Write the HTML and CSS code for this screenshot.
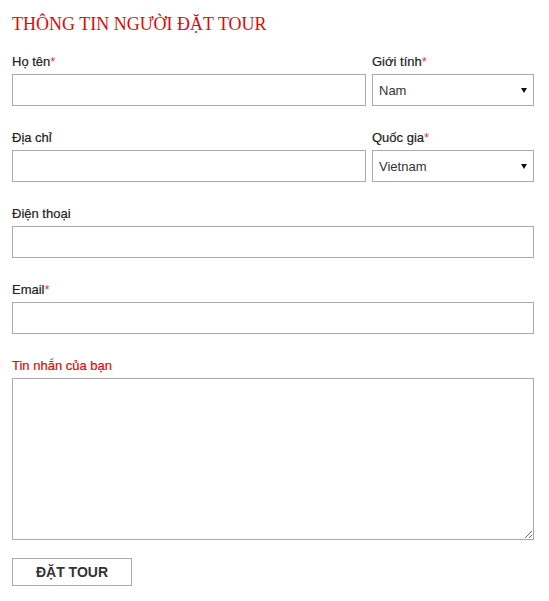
FILE: index.html
```html
<!DOCTYPE html>
<html lang="vi">
<head>
<meta charset="utf-8">
<title>Thông tin người đặt tour</title>
<link rel="stylesheet" href="styles.css">
</head>
<body>
<form class="booking">
  <h2 class="title">THÔNG TIN NGƯỜI ĐẶT TOUR</h2>
  <div class="row">
    <div class="group">
      <label class="label">Họ tên<span class="req">*</span></label>
      <input class="field" type="text">
    </div>
    <div class="group">
      <label class="label">Giới tính<span class="req">*</span></label>
      <div class="select-wrap">
        <select class="field select"><option>Nam</option><option>Nữ</option></select>
        <span class="arrow"></span>
      </div>
    </div>
  </div>
  <div class="row">
    <div class="group">
      <label class="label">Địa chỉ</label>
      <input class="field" type="text">
    </div>
    <div class="group">
      <label class="label">Quốc gia<span class="req">*</span></label>
      <div class="select-wrap">
        <select class="field select"><option>Vietnam</option></select>
        <span class="arrow"></span>
      </div>
    </div>
  </div>
  <div class="group">
    <label class="label">Điện thoại</label>
    <input class="field" type="text">
  </div>
  <div class="group">
    <label class="label">Email<span class="req">*</span></label>
    <input class="field" type="text">
  </div>
  <div class="group group-msg">
    <label class="label label-red">Tin nhắn của bạn</label>
    <textarea class="field area"></textarea>
  </div>
  <button class="btn" type="button">ĐẶT TOUR</button>
</form>
</body>
</html>
```
FILE: styles.css
```css
html, body {
  margin: 0;
  padding: 0;
  background: #fff;
}
.booking {
  padding: 14px 15px 0 12px;
  width: 522px;
  font-family: "Liberation Sans", Arial, sans-serif;
  color: #333;
}
.title {
  margin: 0 0 19px 0;
  font-family: "Liberation Serif", "Times New Roman", serif;
  font-weight: normal;
  font-size: 18px;
  line-height: 20px;
  color: #dd0a0a;
}
.row {
  display: grid;
  grid-template-columns: 354px 162px;
  column-gap: 6px;
}
.group {
  display: flex;
  flex-direction: column;
  margin-bottom: 23px;
}
.group-msg {
  margin-bottom: 18px;
}
.label {
  display: block;
  font-size: 13px;
  line-height: 18px;
  margin-bottom: 3px;
  color: #222;
  -webkit-text-stroke: 0.2px #222;
}
.label-red {
  color: #dd0a0a;
  -webkit-text-stroke: 0.2px #dd0a0a;
}
.req {
  color: #e8383d;
  -webkit-text-stroke: 0;
}
.field {
  box-sizing: border-box;
  display: block;
  width: 100%;
  height: 32px;
  margin: 0;
  border: 1px solid #aaa;
  border-radius: 0;
  background: #fff;
  padding: 0 6px;
  font-family: "Liberation Sans", Arial, sans-serif;
  font-size: 13px;
  color: #333;
  outline: none;
}
.select-wrap {
  position: relative;
}
.select {
  appearance: none;
  -webkit-appearance: none;
}
.arrow {
  position: absolute;
  right: 7px;
  top: 14px;
  width: 0;
  height: 0;
  border-left: 3px solid transparent;
  border-right: 3px solid transparent;
  border-top: 5px solid #111;
  pointer-events: none;
}
.area {
  height: 162px;
  resize: both;
  padding: 6px;
}
.btn {
  box-sizing: border-box;
  width: 120px;
  height: 28px;
  border: 1px solid #aaa;
  background: #fff;
  border-radius: 0;
  font-family: "Liberation Sans", Arial, sans-serif;
  font-weight: bold;
  font-size: 14px;
  color: #333;
  padding: 0;
  cursor: pointer;
}
```
